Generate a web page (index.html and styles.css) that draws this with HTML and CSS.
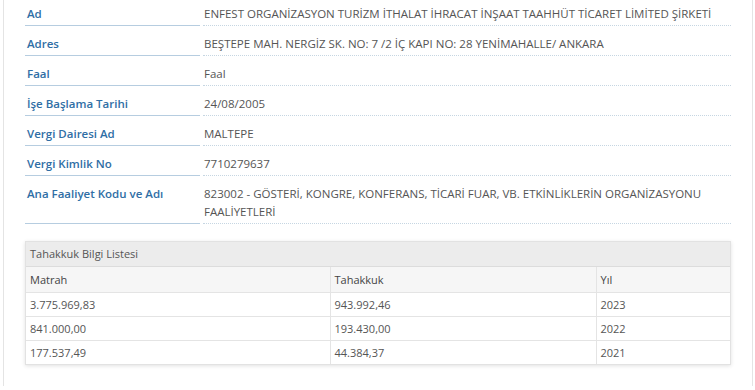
FILE: index.html
```html
<!DOCTYPE html>
<html lang="tr">
<head>
<meta charset="utf-8">
<link rel="stylesheet" href="styles.css">
</head>
<body>
<div class="panel">
  <div class="info">
    <div class="row"><div class="label">Ad</div><div class="value">ENFEST ORGANİZASYON TURİZM İTHALAT İHRACAT İNŞAAT TAAHHÜT TİCARET LİMİTED ŞİRKETİ</div></div>
    <div class="row"><div class="label">Adres</div><div class="value">BEŞTEPE MAH. NERGİZ SK. NO: 7 /2 İÇ KAPI NO: 28 YENİMAHALLE/ ANKARA</div></div>
    <div class="row"><div class="label">Faal</div><div class="value">Faal</div></div>
    <div class="row"><div class="label">İşe Başlama Tarihi</div><div class="value">24/08/2005</div></div>
    <div class="row"><div class="label">Vergi Dairesi Ad</div><div class="value">MALTEPE</div></div>
    <div class="row"><div class="label">Vergi Kimlik No</div><div class="value">7710279637</div></div>
    <div class="row"><div class="label">Ana Faaliyet Kodu ve Adı</div><div class="value">823002 - GÖSTERİ, KONGRE, KONFERANS, TİCARİ FUAR, VB. ETKİNLİKLERİN ORGANİZASYONU FAALİYETLERİ</div></div>
  </div>
  <div class="box">
    <div class="box-title">Tahakkuk Bilgi Listesi</div>
    <table class="grid">
      <thead>
        <tr><th class="c1">Matrah</th><th class="c2">Tahakkuk</th><th class="c3">Yıl</th></tr>
      </thead>
      <tbody>
        <tr><td>3.775.969,83</td><td>943.992,46</td><td>2023</td></tr>
        <tr><td>841.000,00</td><td>193.430,00</td><td>2022</td></tr>
        <tr><td>177.537,49</td><td>44.384,37</td><td>2021</td></tr>
      </tbody>
    </table>
  </div>
</div>
</body>
</html>
```
FILE: styles.css
```css
html, body {
  margin: 0;
  padding: 0;
  background: #fff;
}
body {
  font-family: "Open Sans", "Liberation Sans", sans-serif;
  font-size: 11.5px;
  color: #555;
  width: 755px;
  height: 390px;
  overflow: hidden;
}
.panel {
  margin: 0 2px 0 3px;
  border-left: 1px solid #e4e4e4;
  border-right: 1px solid #e4e4e4;
  height: 390px;
  box-sizing: border-box;
  padding: 0 21px 0 21px;
}
.info {
  display: flex;
  flex-direction: column;
  margin-top: -4px;
}
.row {
  display: flex;
}
.label {
  width: 175px;
  flex: none;
  padding: 9px 0 2px 2px;
  box-sizing: border-box;
  color: #2f6ea5;
  font-weight: 600;
  line-height: 18px;
  border-bottom: 1px solid #b6cde0;
}
.value {
  flex: 1;
  margin-left: 3px;
  padding: 9px 0 2px 1px;
  line-height: 18px;
  border-bottom: 1px dotted #c6d6e2;
  color: #555;
}
.box {
  margin-top: 17px;
  border: 1px solid #e2e2e2;
  box-shadow: 0 1px 4px rgba(0,0,0,0.12);
}
.box-title {
  background: #ececec;
  height: 24px;
  line-height: 24px;
  padding-left: 4px;
  font-size: 11px;
  color: #555;
  border-bottom: 1px solid #dcdcdc;
}
.grid {
  width: 100%;
  border-collapse: collapse;
  table-layout: fixed;
  font-size: 11px;
}
.grid th, .grid td {
  box-sizing: border-box;
  height: 24px;
  padding: 0 4px;
  text-align: left;
  font-weight: normal;
  border-bottom: 1px solid #e4e4e4;
  border-right: 1px solid #e4e4e4;
  color: #555;
}
.grid tr > :last-child { border-right: none; }
.grid tbody tr:last-child td { border-bottom: none; }
.grid th {
  background: #f6f6f6;
  color: #444;
  height: 25px;
}
.c1 { width: 304px; }
.c2 { width: 266px; }
```
